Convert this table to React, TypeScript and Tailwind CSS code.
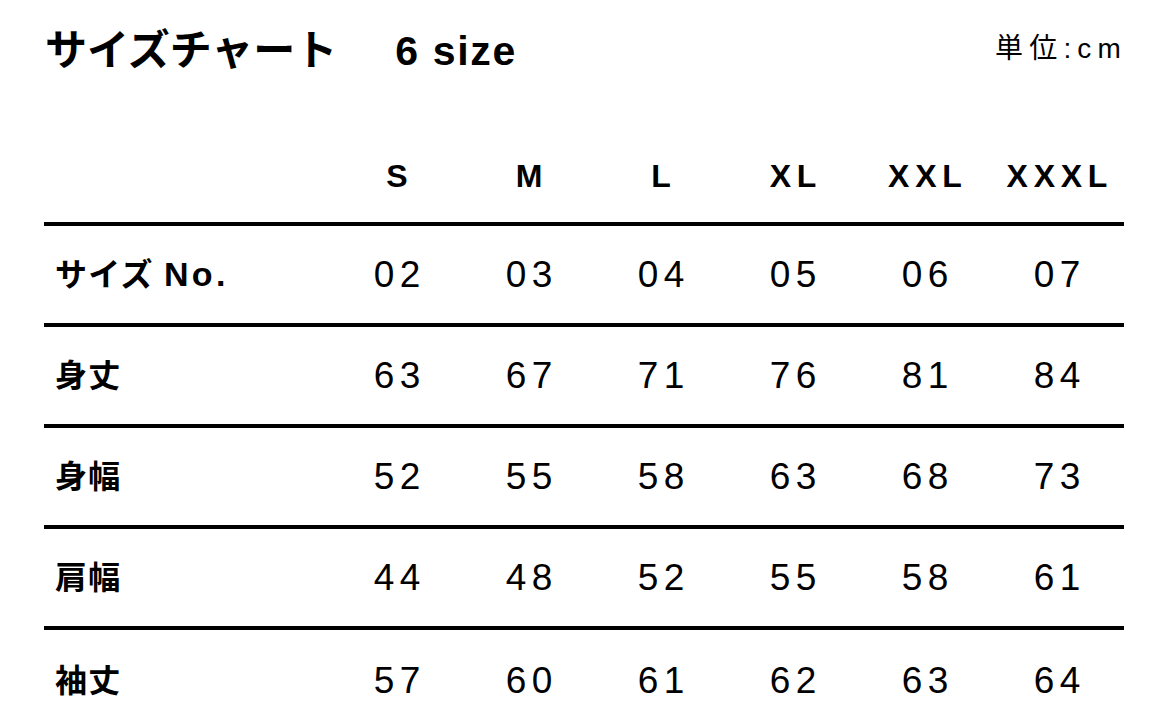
import React from 'react';

const SIZES = ['S', 'M', 'L', 'XL', 'XXL', 'XXXL'];

const ROWS: { label: string; latin?: string; values: string[] }[] = [
    { label: 'サイズ', latin: 'No.', values: ['02', '03', '04', '05', '06', '07'] },
    { label: '身丈', values: ['63', '67', '71', '76', '81', '84'] },
    { label: '身幅', values: ['52', '55', '58', '63', '68', '73'] },
    { label: '肩幅', values: ['44', '48', '52', '55', '58', '61'] },
    { label: '袖丈', values: ['57', '60', '61', '62', '63', '64'] },
];

const FONT = { fontFamily: '"Liberation Sans", "Noto Sans CJK JP", sans-serif' };

export default function App() {
    return (
        <div className="w-[1169px] h-[720px] overflow-hidden bg-white text-black" style={FONT}>
            {/* Title */}
            <div className="flex items-center justify-between pl-[45px] pr-[42px] pt-[24px] h-[74px]">
                <h1 className="flex items-baseline font-bold leading-none">
                    <span className="text-[42px]" style={{ fontFamily: '"Noto Sans CJK JP", sans-serif' }}>サイズチャート</span>
                    <span className="text-[41px] ml-[58px] tracking-[0.04em]">6 size</span>
                </h1>
                <p className="text-[28px] leading-none tracking-[0.22em]">単位:cm</p>
            </div>

            {/* Table */}
            <div className="ml-[44px] w-[1080px] mt-[53px]">
                <div className="grid grid-cols-[287px_repeat(6,132px)] h-[99px] items-center border-b-4 border-black">
                    <div />
                    {SIZES.map(s => (
                        <div key={s} className="text-center text-[32px] font-bold tracking-[0.18em] pl-[0.18em] pt-[2px]">{s}</div>
                    ))}
                </div>
                {ROWS.map((r, i) => (
                    <div key={r.label} className={`grid grid-cols-[287px_repeat(6,132px)] h-[101px] items-center ${i < ROWS.length - 1 ? 'border-b-4 border-black' : ''}`}>
                        <div className="pl-[11px] text-[32px] font-bold tracking-[0.04em]">
                            {r.label}
                            {r.latin && <span className="ml-[10px] text-[34px] tracking-[0.1em]">{r.latin}</span>}
                        </div>
                        {r.values.map((v, j) => (
                            <div key={j} className="text-center text-[37px] tracking-[0.15em] pl-[0.15em]">{v}</div>
                        ))}
                    </div>
                ))}
            </div>
        </div>
    );
}
